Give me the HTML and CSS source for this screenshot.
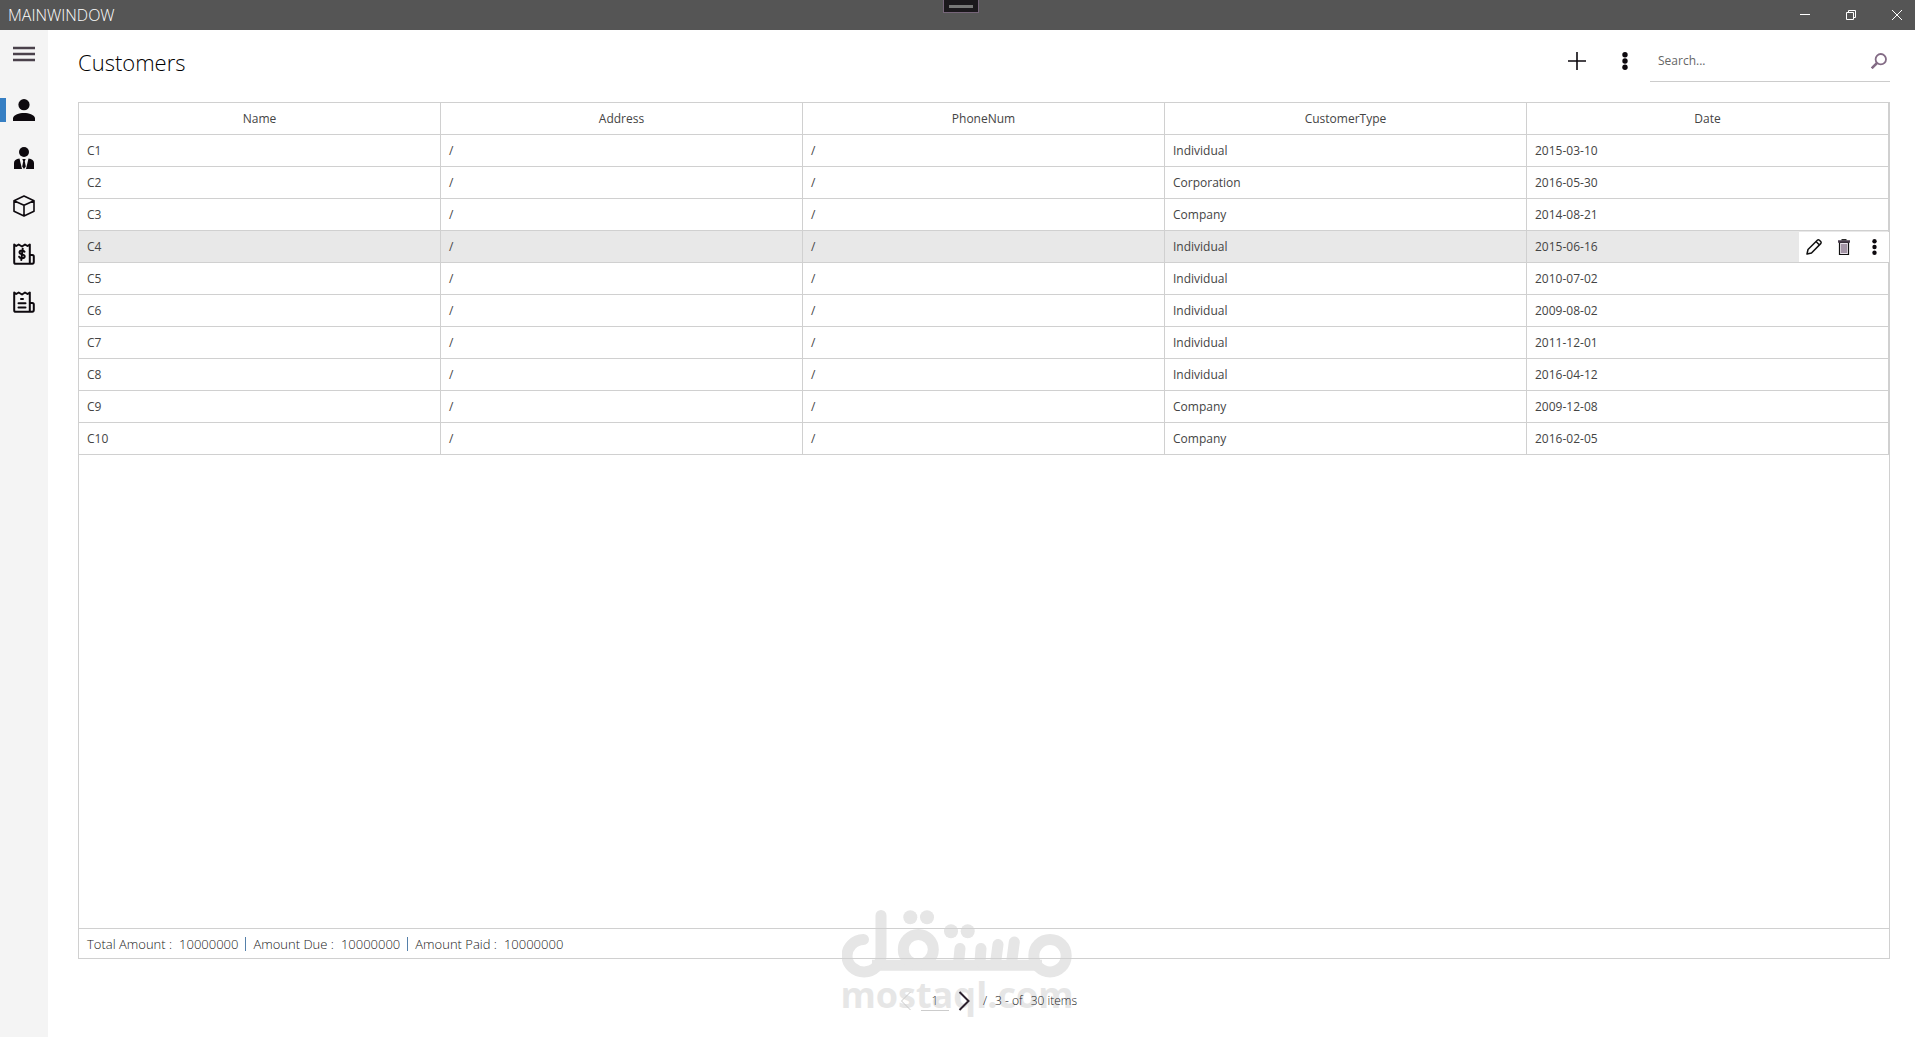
FILE: index.html
```html
<!DOCTYPE html>
<html lang="en">
<head>
<meta charset="utf-8">
<title>MainWindow</title>
<link rel="stylesheet" href="styles.css">
</head>
<body>
<header class="titlebar">
  <span class="titlebar-text">MAINWINDOW</span>
  <span class="debug-grip"></span>
  <div class="window-buttons">
    <button type="button" aria-label="Minimize"><svg width="10" height="10" viewBox="0 0 10 10"><path d="M0 4.5h10"/></svg></button>
    <button type="button" aria-label="Restore"><svg width="10" height="10" viewBox="0 0 10 10"><path d="M.5 2.5h7v7h-7zM2.5 2.5v-2h7v7h-2"/></svg></button>
    <button type="button" aria-label="Close"><svg width="10" height="10" viewBox="0 0 10 10"><path d="M0 0l10 10M10 0L0 10"/></svg></button>
  </div>
</header>
<div class="shell">
  <nav class="sidebar">
    <button type="button" class="menu-button" aria-label="Menu"><svg width="22" height="16" viewBox="0 0 22 16"><path d="M0 2h22M0 8h22M0 14h22" stroke="#4a414b" stroke-width="2.4"/></svg></button>
    <button type="button" class="active" aria-label="Customers"><svg width="22" height="22" viewBox="0 0 22 22"><circle cx="11" cy="5.7" r="5.6"/><path d="M0 22v-3c1-3.300 6-5 11-5s10 1.700 11 5v3z"/></svg></button>
    <button type="button" aria-label="Employees"><svg width="22" height="22" viewBox="0 0 22 22"><circle cx="11" cy="5" r="5"/><path d="M1 22v-6c0-2.500 2-4 5.500-4.500L9 22zM21 22v-6c0-2.500-2-4-5.500-4.500L13 22zM9.300 12h3.400l-.9 2.300 1 5.200L11 22l-1.800-2.500 1-5.200z"/></svg></button>
    <button type="button" aria-label="Products"><svg width="22" height="22" viewBox="0 0 22 22" class="line"><path d="M11 1l10 4.700v10.600L11 21 1 16.300V5.700zM1 5.700l10 4.600 10-4.600M11 10.300V21"/></svg></button>
    <button type="button" aria-label="Invoices"><svg width="22" height="22" viewBox="0 0 22 22" class="line bold"><path d="M1.200 1.500l2 1.500 2.500-1.500L9 3.500l3-2 2.500 1.500 2.300-1.500v19.300H2.800c-1 0-1.600-.6-1.600-1.600zM16.800 12h2.500c.9 0 1.500.6 1.500 1.500v5.300c0 1-.6 2-1.500 2h-2.500"/><path d="M11.500 8.700c-.5-1-1.400-1.300-2.500-1.300-1.500 0-2.500.8-2.500 1.900 0 2.900 5.200 1.300 5.200 4 0 1.200-1.100 2-2.700 2-1.400 0-2.400-.5-2.800-1.500M9.700 5.700L8.300 17"/></svg></button>
    <button type="button" aria-label="Reports"><svg width="22" height="22" viewBox="0 0 22 22" class="line bold"><path d="M1.200 1.500l2 1.500 2.500-1.500L9 3.500l3-2 2.500 1.500 2.300-1.500v19.300H2.800c-1 0-1.600-.6-1.600-1.600zM16.800 12h2.500c.9 0 1.500.6 1.500 1.500v5.300c0 1-.6 2-1.500 2h-2.500M8 8h2M5.500 12.300h7M5.500 16.500h7"/></svg></button>
  </nav>
  <main class="page">
    <div class="page-head">
      <h1>Customers</h1>
      <div class="tools">
        <button type="button" aria-label="Add"><svg width="18" height="18" viewBox="0 0 18 18" class="line"><path d="M0 9h18M9 0v18"/></svg></button>
        <button type="button" aria-label="More"><svg width="6" height="18" viewBox="0 0 6 18"><circle cx="3" cy="2.700" r="2.700"/><circle cx="3" cy="9" r="2.700"/><circle cx="3" cy="15.300" r="2.700"/></svg></button>
      </div>
      <form class="search">
        <input type="text" placeholder="Search..." aria-label="Search">
        <button type="button" aria-label="Search"><svg width="16" height="16" viewBox="0 0 16 16" fill="none" stroke="#836b85" stroke-width="1.800"><circle cx="9.800" cy="6.200" r="5.200"/><path d="M6 10l-5.300 5.300" stroke-width="2.500"/></svg></button>
      </form>
    </div>
    <section class="panel">
      <table class="grid">
        <thead><tr><th>Name</th><th>Address</th><th>PhoneNum</th><th>CustomerType</th><th>Date</th></tr></thead>
        <tbody>
          <tr><td>C1</td><td>/</td><td>/</td><td>Individual</td><td>2015-03-10</td></tr>
          <tr><td>C2</td><td>/</td><td>/</td><td>Corporation</td><td>2016-05-30</td></tr>
          <tr><td>C3</td><td>/</td><td>/</td><td>Company</td><td>2014-08-21</td></tr>
          <tr class="hovered"><td>C4</td><td>/</td><td>/</td><td>Individual</td><td>2015-06-16
            <div class="row-actions">
              <button type="button" aria-label="Edit"><svg width="16" height="16" viewBox="0 0 16 16" fill="none" stroke="#111" stroke-width="1.500" stroke-linejoin="round"><path d="M1 15l1-4.500L11.300 1.200c.6-.6 1.500-.6 2.100 0l1.300 1.300c.6.600.6 1.500 0 2.100L5.500 14zM10 2.500L13.500 6"/></svg></button>
              <button type="button" aria-label="Delete"><svg width="14" height="16" viewBox="0 0 14 16" fill="none" stroke="#111" stroke-width="1.200"><path d="M2.500 3.500h9v12h-9z" fill="#e9e2ea"/><path d="M5 5v9M7 5v9M9 5v9" stroke="#77637a"/><path d="M1 2.500h12" stroke-width="2.500" stroke="#493c4b"/><path d="M4.500.700h5"/></svg></button>
              <button type="button" aria-label="Row menu"><svg width="5" height="16" viewBox="0 0 5 16"><circle cx="2.500" cy="2.300" r="2.200"/><circle cx="2.500" cy="8" r="2.200"/><circle cx="2.500" cy="13.700" r="2.200"/></svg></button>
            </div></td></tr>
          <tr><td>C5</td><td>/</td><td>/</td><td>Individual</td><td>2010-07-02</td></tr>
          <tr><td>C6</td><td>/</td><td>/</td><td>Individual</td><td>2009-08-02</td></tr>
          <tr><td>C7</td><td>/</td><td>/</td><td>Individual</td><td>2011-12-01</td></tr>
          <tr><td>C8</td><td>/</td><td>/</td><td>Individual</td><td>2016-04-12</td></tr>
          <tr><td>C9</td><td>/</td><td>/</td><td>Company</td><td>2009-12-08</td></tr>
          <tr><td>C10</td><td>/</td><td>/</td><td>Company</td><td>2016-02-05</td></tr>
        </tbody>
      </table>
      <footer class="totals">
        <span>Total Amount :</span><span>10000000</span><i></i>
        <span>Amount Due :</span><span>10000000</span><i></i>
        <span>Amount Paid :</span><span>10000000</span>
      </footer>
    </section>
    <div class="pager">
      <button type="button" disabled aria-label="Previous page"><svg width="12" height="20" viewBox="0 0 12 20"><path d="M10.500 1L1.500 10l9 9" stroke="#c9c9c9"/></svg></button>
      <input type="text" value="1" aria-label="Page">
      <button type="button" aria-label="Next page"><svg width="12" height="20" viewBox="0 0 12 20"><path d="M1.500 1l9 9-9 9" stroke="#2b202d" stroke-width="2"/></svg></button>
      <span class="pager-text"><span>/</span><span>3 - of</span><span>30 items</span></span>
    </div>
  </main>
</div>
<svg class="watermark" width="232" height="112" viewBox="0 0 232 112" role="img" aria-label="مستقل mostaql.com">
  <g fill="none" stroke="#e6e6e6" stroke-width="11" stroke-linecap="round">
    <circle cx="208" cy="45.700" r="16.200"/>
    <path d="M30 55.200H200" stroke-linecap="butt"/>
    <path d="M172.300 32L169.700 52M156 34.500L153.700 52M139 38.500L138 52M118 38.500L116.700 52"/>
    <circle cx="76.300" cy="39.500" r="15"/>
    <path d="M39 5.500V45.500A17 16.200 0 1 1 21.500 29.500"/>
  </g>
  <g fill="#e6e6e6"><circle cx="109" cy="21.300" r="7"/><circle cx="125.700" cy="21.300" r="7"/><circle cx="68.300" cy="7.300" r="7"/><circle cx="85" cy="7.300" r="7"/></g>
  <text x="115" y="98" text-anchor="middle" class="watermark-text">mostaql.com</text>
</svg>
</body>
</html>
```
FILE: styles.css
```css
* { box-sizing: border-box; }

body {
  margin: 0;
  min-height: 100vh;
  display: flex;
  flex-direction: column;
  position: relative;
  background: #fff;
  color: #444;
  font: 12px/16px "Open Sans", "Noto Sans", sans-serif;
}

button {
  display: flex;
  align-items: center;
  justify-content: center;
  padding: 0;
  border: 0;
  background: none;
  color: #0d090e;
  font: inherit;
}

svg { display: block; fill: #0d090e; }
svg[fill="none"] { fill: none; }
.line { fill: none; stroke: #0d090e; stroke-width: 1.6; stroke-linejoin: round; }
.bold { stroke-width: 2; stroke-linecap: round; }

input {
  min-width: 0;
  border: 0;
  outline: 0;
  background: none;
  color: #444;
  font: inherit;
}

/* Title bar */
.titlebar {
  display: grid;
  grid-template-columns: 1fr 36px 1fr;
  height: 30px;
  padding-left: 6px;
  background: #555;
}
.titlebar-text {
  padding-left: 2px;
  color: #fff;
  font-size: 16px;
  line-height: 30px;
  font-weight: 300;
}
.debug-grip {
  height: 13px;
  border: 1px solid #766579;
  border-top-width: 0;
  background: linear-gradient(#777, #777) center / 24px 3px no-repeat #1b181c;
}
.window-buttons { display: flex; justify-content: flex-end; gap: 10px; }
.window-buttons button { width: 36px; }
.window-buttons svg { fill: none; stroke: #fff; stroke-width: 1; }

/* Sidebar */
.shell { flex: 1; display: flex; }
.sidebar { width: 48px; background: #f4f4f4; }
.sidebar button { position: relative; width: 48px; height: 48px; }
.sidebar .menu-button { margin-bottom: 8px; }
.sidebar .active::before {
  content: "";
  position: absolute;
  left: 0;
  top: 12px;
  width: 6px;
  height: 24px;
  background: #367fc3;
}

/* Page */
.page {
  flex: 1;
  min-width: 0;
  display: flex;
  flex-direction: column;
  padding: 0 25px 16px 30px;
  position: relative;
  z-index: 1;
}
.page-head { display: flex; height: 72px; padding: 10px 0 20px; }
h1 {
  flex: 1;
  margin: 0;
  color: #000;
  font-size: 22px;
  line-height: 44px;
  font-weight: 300;
}
.tools { display: flex; padding-right: 1px; }
.tools button { width: 48px; }
.search { display: flex; width: 240px; border-bottom: 1px solid #ccc; }
.search input { flex: 1; padding: 0 8px; }
.search input::placeholder { color: #666; }
.search button { width: 20px; padding-right: 2px; }

.panel {
  flex: 1;
  display: flex;
  flex-direction: column;
  justify-content: space-between;
  border: 1px solid #d0d0d0;
}
.grid {
  width: 100%;
  border-collapse: separate;
  border-spacing: 0;
  table-layout: fixed;
}
th, td {
  height: 32px;
  padding: 0 8px;
  border: solid #d0d0d0;
  border-width: 0 1px 1px 0;
  font-weight: 400;
}
td { position: relative; }
.hovered td { background: #e8e8e8; }
.row-actions {
  position: absolute;
  top: 1px;
  right: -1px;
  bottom: 0;
  display: flex;
  background: #fff;
}
.row-actions button { width: 30px; }

.totals {
  display: flex;
  align-items: center;
  gap: 7px;
  height: 30px;
  padding: 0 8px;
  border-top: 1px solid #d0d0d0;
  color: #222;
  font-size: 13px;
  font-weight: 300;
}
.totals i { width: 1px; height: 14px; background: #5580aa; }

/* Pager */
.pager {
  display: flex;
  align-items: center;
  justify-content: center;
  height: 40px;
  margin-top: 22px;
  color: #222;
}
.pager button { width: 30px; height: 30px; }
.pager svg { fill: none; stroke-width: 1; }
.pager input {
  width: 28px;
  height: 20px;
  padding: 0;
  border-bottom: 1px solid #ccc;
  text-align: center;
  font-weight: 300;
}
.pager-text { display: flex; gap: 8px; padding-left: 4px; font-weight: 300; }

.watermark {
  position: absolute;
  left: calc(50% - 116px);
  bottom: 15px;
}
.watermark-text {
  fill: #e6e6e6;
  font-size: 36px;
  font-weight: 700;
}
```
